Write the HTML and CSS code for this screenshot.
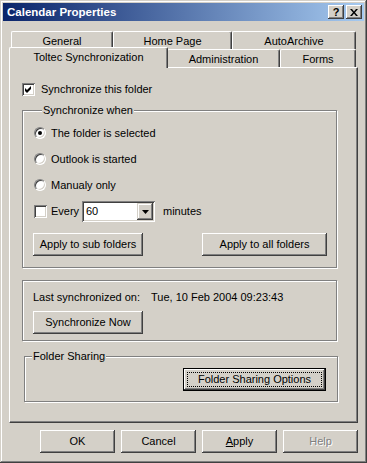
FILE: index.html
```html
<!DOCTYPE html>
<html lang="en">
<head>
	<meta charset="UTF-8">
	<title>Calendar Properties</title>
	<link rel="stylesheet" href="styles.css">
</head>
<body>
<div class="window">
	<div class="titlebar">
		<span class="title">Calendar Properties</span>
		<span class="tbtn help-btn">?</span>
		<span class="tbtn close-btn">
			<svg width="8" height="7" viewBox="0 0 8 7"><path d="M0 0h2l2 2.5L6 0h2L5 3.5 8 7H6L4 4.5 2 7H0l3-3.5z" fill="#000"/></svg>
		</span>
	</div>
	<div class="body">
		<div class="tabs">
			<div class="tabrow back">
				<div class="tab t-general">General</div>
				<div class="tab t-home">Home Page</div>
				<div class="tab t-archive">AutoArchive</div>
			</div>
			<div class="tabrow front">
				<div class="tab selected">Toltec Synchronization</div>
				<div class="tab t-admin">Administration</div>
				<div class="tab t-forms">Forms</div>
			</div>
		</div>
		<div class="panel">
			<div class="row check-row">
				<span class="chk"><svg width="13" height="13" viewBox="0 0 13 13"><polygon points="3,5 5,7 9,3 9,6 5,10 3,8" fill="#000"/></svg></span>
				<span>Synchronize this folder</span>
			</div>

			<div class="group g-when">
				<div class="group-title">Synchronize when</div>
				<div class="row radio-row"><span class="radio on"></span><span>The folder is selected</span></div>
				<div class="row radio-row"><span class="radio"></span><span>Outlook is started</span></div>
				<div class="row radio-row"><span class="radio"></span><span>Manualy only</span></div>
				<div class="row every-row">
					<span class="chk empty"></span>
					<span class="every">Every</span>
					<span class="combo">
						<span class="combo-val">60</span>
						<span class="combo-btn"><svg width="7" height="4" viewBox="0 0 7 4"><polygon points="0,0 7,0 3.5,4" fill="#000"/></svg></span>
					</span>
					<span class="minutes">minutes</span>
				</div>
				<div class="btn-row">
					<button class="btn w-sub">Apply to sub folders</button>
					<button class="btn w-all">Apply to all folders</button>
				</div>
			</div>

			<div class="group g-last">
				<div class="row last-row">
					<span class="last-label">Last synchronized on:</span>
					<span>Tue, 10 Feb 2004 09:23:43</span>
				</div>
				<button class="btn w-sub sync-now">Synchronize Now</button>
			</div>

			<div class="group g-share">
				<div class="group-title">Folder Sharing</div>
				<div class="share-row">
					<button class="btn default w-share"><span class="focus">Folder Sharing Options</span></button>
				</div>
			</div>
		</div>
		<div class="footer">
			<button class="btn w-foot">OK</button>
			<button class="btn w-foot">Cancel</button>
			<button class="btn w-foot"><u>A</u>pply</button>
			<button class="btn w-foot disabled">Help</button>
		</div>
	</div>
</div>
</body>
</html>
```

FILE: styles.css
```css
*{
	box-sizing: border-box;
}
body{
	margin: 0;
	background: #d4d0c8;
	font: 11px "Liberation Sans", Arial, sans-serif;
	color: #000;
}
.window{
	width: 367px;
	height: 463px;
	padding: 3px;
	background: #d4d0c8;
	box-shadow: inset -1px -1px #404040, inset 1px 1px #d4d0c8, inset -2px -2px #808080, inset 2px 2px #fff;
}

/* title bar */
.titlebar{
	height: 18px;
	display: flex;
	align-items: center;
	padding: 0 2px;
	background: linear-gradient(to right, #0a246a, #a6caf0);
}
.title{
	flex: 1;
	padding-left: 2px;
	color: #fff;
	font-weight: bold;
	font-size: 11.5px;
}
.tbtn{
	width: 16px;
	height: 14px;
	display: flex;
	align-items: center;
	justify-content: center;
	background: #d4d0c8;
	box-shadow: inset -1px -1px #404040, inset 1px 1px #fff, inset -2px -2px #808080;
	font-weight: bold;
	font-size: 11px;
	line-height: 14px;
}
.help-btn{
	margin-right: 2px;
}

.body{
	padding: 10px 6px 0 6px;
}

/* tabs */
.tabs{
	padding-left: 2px;
}
.tabrow{
	display: flex;
	height: 18px;
}
.tabrow.front{
	align-items: flex-end;
}
.tab{
	height: 18px;
	border: 1px solid;
	border-color: #fff #404040 transparent #fff;
	border-bottom: 0;
	border-radius: 2px 2px 0 0;
	box-shadow: inset -1px 0 #808080;
	padding-top: 3px;
	line-height: 13px;
	text-align: center;
	background: #d4d0c8;
	white-space: nowrap;
}
.t-general{ width: 102px; }
.t-home{ width: 119px; }
.t-archive{ width: 124px; }
.t-admin{ width: 113px; }
.t-forms{ width: 76px; }
.tab.selected{
	width: 159px;
	height: 21px;
	margin: 0 -1px -1px -2px;
	position: relative;
	z-index: 1;
}

/* panel */
.panel{
	height: 356px;
	border: 1px solid;
	border-color: #fff #404040 #404040 #fff;
	box-shadow: inset -1px -1px #808080;
	padding: 15px 0 0 12px;
}
.row{
	display: flex;
	align-items: center;
	line-height: 13px;
}
.check-row{
	height: 13px;
	gap: 6px;
}
.chk{
	width: 13px;
	height: 13px;
	flex: none;
	background: #fff;
	box-shadow: inset 1px 1px #808080, inset -1px -1px #fff, inset 2px 2px #404040, inset -2px -2px #d4d0c8;
}
.chk svg{
	display: block;
}

.group{
	width: 315px;
	border: 1px solid #808080;
	box-shadow: inset 1px 1px #fff, 1px 1px #fff;
}
.group-title{
	display: table;
	margin: -7px 0 0 9px;
	padding: 0 1px;
	line-height: 13px;
	background: #d4d0c8;
}
.g-when{
	margin-top: 14px;
	padding: 0 9px 11px 10px;
}
.radio-row{
	height: 26px;
	padding-left: 1px;
}
.g-when .group-title + .radio-row{
	margin-top: 3px;
}
.radio{
	width: 12px;
	height: 12px;
	margin-right: 5px;
	border-radius: 50%;
	border: 1px solid;
	border-color: #808080 #fff #fff #808080;
	background: #fff;
	box-shadow: inset 1px 1px #404040, inset -1px -1px #d4d0c8;
	display: flex;
	align-items: center;
	justify-content: center;
}
.radio.on::after{
	content: "";
	width: 4px;
	height: 4px;
	border-radius: 50%;
	background: #000;
}
.every-row{
	height: 21px;
	margin-top: 3px;
	padding-left: 1px;
}
.every-row .chk{
	margin-right: 4px;
}
.every{
	width: 31px;
}
.combo{
	width: 73px;
	height: 21px;
	display: flex;
	align-items: center;
	padding: 2px;
	background: #fff;
	box-shadow: inset 1px 1px #808080, inset -1px -1px #fff, inset 2px 2px #404040, inset -2px -2px #d4d0c8;
}
.combo-val{
	flex: 1;
	padding-left: 2px;
}
.combo-btn{
	width: 16px;
	height: 17px;
	display: flex;
	align-items: center;
	justify-content: center;
	background: #d4d0c8;
	box-shadow: inset -1px -1px #404040, inset 1px 1px #d4d0c8, inset -2px -2px #808080, inset 2px 2px #fff;
}
.combo-btn svg{
	display: block;
}
.minutes{
	margin-left: 8px;
}
.btn-row{
	display: flex;
	justify-content: space-between;
	margin-top: 11px;
}

/* buttons */
.btn{
	height: 23px;
	padding: 0;
	border: 0;
	margin: 0;
	font: inherit;
	color: #000;
	background: #d4d0c8;
	box-shadow: inset -1px -1px #404040, inset 1px 1px #fff, inset -2px -2px #808080, inset 2px 2px #d4d0c8;
	display: flex;
	align-items: center;
	justify-content: center;
	line-height: 13px;
	-webkit-appearance: none;
	appearance: none;
}
.w-sub{ width: 110px; }
.w-all{ width: 125px; }
.w-share{ width: 143px; }
.w-foot{ width: 75px; }
.btn.default{
	border: 1px solid #000;
	align-items: stretch;
	padding: 3px;
}
.focus{
	flex: 1;
	border: 1px dotted #000;
	display: flex;
	align-items: center;
	justify-content: center;
}
.btn.disabled{
	color: #808080;
	text-shadow: 1px 1px #fff;
}

.g-last{
	margin-top: 12px;
	padding: 10px 0 6px 10px;
}
.last-row{
	height: 13px;
}
.last-label{
	width: 118px;
}
.sync-now{
	margin-top: 7px;
}

.g-share{
	width: 314px;
	margin: 15px 0 0 2px;
	padding: 0 11px 10px 0;
}
.g-share .group-title{
	margin-left: 7px;
}
.share-row{
	display: flex;
	justify-content: flex-end;
	margin-top: 5px;
}

.footer{
	display: flex;
	justify-content: flex-end;
	gap: 6px;
	margin-top: 7px;
}
```
